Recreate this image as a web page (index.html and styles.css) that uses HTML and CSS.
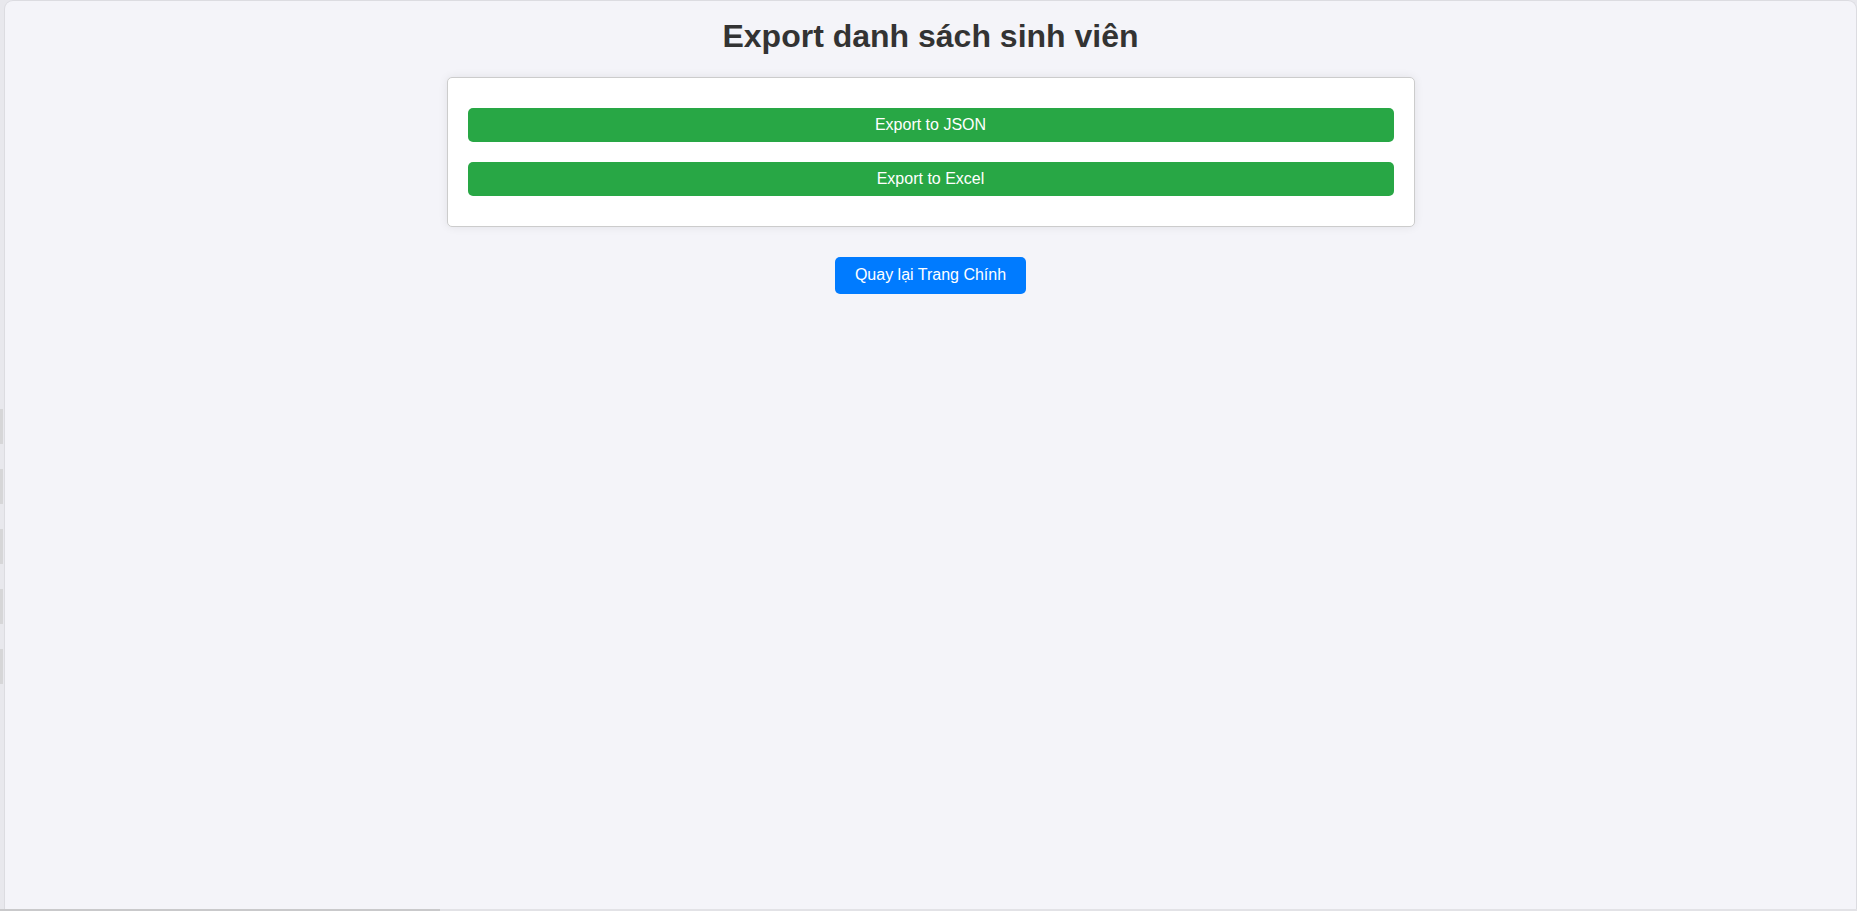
FILE: index.html
```html
<!DOCTYPE html>
<html lang="vi">
<head>
<meta charset="utf-8">
<title>Export danh sách sinh viên</title>
<link rel="stylesheet" href="styles.css">
</head>
<body>
<div class="screen">
  <div class="side">
    <span class="tick"></span>
    <span class="tick"></span>
    <span class="tick"></span>
    <span class="tick"></span>
    <span class="tick"></span>
  </div>
  <div class="frame">
    <h1 class="title">Export danh sách sinh viên</h1>
    <div class="card">
      <button class="btn-export">Export to JSON</button>
      <button class="btn-export">Export to Excel</button>
    </div>
    <a class="btn-back" href="#">Quay lại Trang Chính</a>
  </div>
</div>
<div class="bottombar">
  <span class="bar-dark"></span>
  <span class="bar-light"></span>
</div>
</body>
</html>
```
FILE: styles.css
```css
html, body {
  margin: 0;
  padding: 0;
}
body {
  background: #e8e8ed;
  font-family: "Liberation Sans", Arial, sans-serif;
  height: 911px;
  overflow: hidden;
}
.screen {
  display: flex;
  height: 909px;
}
.side {
  width: 4px;
  display: flex;
  flex-direction: column;
  padding-top: 409px;
  gap: 25px;
  box-sizing: border-box;
}
.tick {
  display: block;
  width: 3px;
  height: 35px;
  background: #d6d6d8;
}
.frame {
  flex: 1;
  background: #f4f4f9;
  border: 1px solid #dcdce1;
  border-bottom: none;
  border-radius: 9px 9px 0 0;
  text-align: center;
}
.title {
  font-size: 32px;
  font-weight: bold;
  color: #333333;
  line-height: 37px;
  margin: 17px 0 22px;
}
.card {
  box-sizing: border-box;
  width: 968px;
  margin: 0 auto 30px;
  padding: 20px;
  background: #ffffff;
  border: 1px solid #cccccc;
  border-radius: 5px;
  box-shadow: 0 0 10px rgba(0, 0, 0, 0.08);
  display: flex;
  flex-direction: column;
}
.btn-export {
  display: block;
  width: 100%;
  margin: 10px 0;
  padding: 8px 0;
  border: none;
  border-radius: 5px;
  background: #28a745;
  color: #ffffff;
  font-family: "Liberation Sans", Arial, sans-serif;
  font-size: 16px;
  line-height: 18px;
}
.btn-back {
  display: inline-block;
  padding: 9px 20px 10px;
  border-radius: 5px;
  background: #007bff;
  color: #ffffff;
  font-size: 16px;
  line-height: 18px;
  text-decoration: none;
}
.bottombar {
  display: flex;
  height: 2px;
}
.bar-dark {
  width: 440px;
  background: #c9c9cb;
}
.bar-light {
  flex: 1;
  background: #e2e2e6;
}
```
